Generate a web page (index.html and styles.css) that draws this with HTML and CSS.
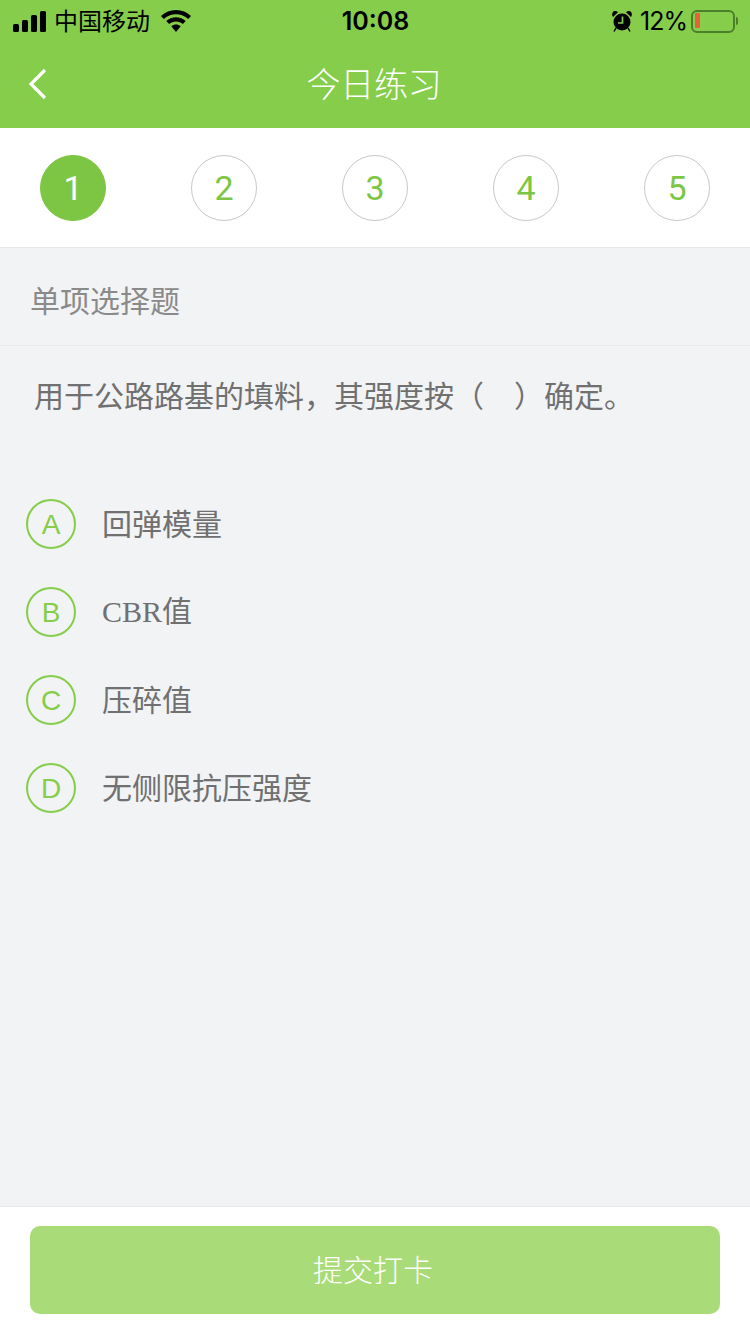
FILE: index.html
```html
<!DOCTYPE html>
<html lang="zh-CN">
<head>
<meta charset="utf-8">
<title>今日练习</title>
<link rel="stylesheet" href="styles.css">
</head>
<body>
<div class="page">
  <header class="top">
    <div class="status">
      <div class="status-left">
        <svg class="signal" width="34" height="21" viewBox="0 0 34 21"><rect x="0" y="13" width="6" height="8" rx="1.500"/><rect x="9" y="9" width="6" height="12" rx="1.500"/><rect x="18" y="4" width="6" height="17" rx="1.500"/><rect x="27" y="0" width="6" height="21" rx="1.500"/></svg>
        <span class="carrier">中国移动</span>
        <svg class="wifi" width="30" height="22" viewBox="0 0 30 22"><path d="M15 0C9.200 0 4 2.300 0 6l2.800 3C6 6 10.300 4.200 15 4.200S24 6 27.200 9L30 6C26 2.300 20.800 0 15 0z"/><path d="M15 7.200c-3.800 0-7.200 1.400-9.800 3.800l2.900 3c1.800-1.600 4.200-2.600 6.900-2.600s5.100 1 6.900 2.600l2.900-3c-2.600-2.400-6-3.800-9.800-3.800z"/><path d="M15 14.500c-1.800 0-3.400.6-4.700 1.700L15 22l4.700-5.800c-1.300-1.100-2.900-1.700-4.700-1.700z"/></svg>
      </div>
      <div class="time">10:08</div>
      <div class="status-right">
        <svg class="alarm" width="20" height="22" viewBox="0 0 20 22"><path d="M1 7 6 2.300C4.400.6 1.800.8.700 2.500-.2 3.900 0 5.800 1 7zM19 7 14 2.300c1.600-1.700 4.200-1.500 5.300.2.900 1.400.7 3.300-.3 4.500z"/><circle cx="10" cy="12" r="8.500"/><path d="M4 18l-2 3.500M16 18l2 3.500" stroke="#000" stroke-width="1.500" fill="none"/><path d="M10.500 6.500V13H6" stroke="#86cd4b" stroke-width="1.700" fill="none"/></svg>
        <span class="battery-pct">12%</span>
        <div class="battery"><span class="battery-fill"></span></div>
        <span class="battery-cap"></span>
      </div>
    </div>
    <nav class="nav">
      <svg class="back" width="20" height="32" viewBox="0 0 20 32"><path d="M17 2 3 16l14 14" fill="none" stroke="#fff" stroke-width="3.200"/></svg>
      <h1 class="title">今日练习</h1>
    </nav>
  </header>

  <section class="steps">
    <div class="step step-on">1</div>
    <div class="step">2</div>
    <div class="step">3</div>
    <div class="step">4</div>
    <div class="step">5</div>
  </section>

  <main class="main">
    <div class="qtype">单项选择题</div>
    <p class="question">用于公路路基的填料，其强度按（　）确定。</p>
    <ul class="options">
      <li class="option"><span class="letter">A</span><span class="opt-text">回弹模量</span></li>
      <li class="option"><span class="letter">B</span><span class="opt-text"><span class="latin">CBR</span>值</span></li>
      <li class="option"><span class="letter">C</span><span class="opt-text">压碎值</span></li>
      <li class="option"><span class="letter">D</span><span class="opt-text">无侧限抗压强度</span></li>
    </ul>
  </main>

  <footer class="footer">
    <button class="submit" type="button">提交打卡</button>
  </footer>
</div>
</body>
</html>
```
FILE: styles.css
```css
* { box-sizing: border-box; }
html, body { margin: 0; padding: 0; }
body {
  width: 750px;
  height: 1334px;
  overflow: hidden;
  font-family: "Noto Sans CJK SC", "Liberation Sans", sans-serif;
  background: #f2f3f5;
}
.page { display: flex; flex-direction: column; height: 1334px; }

.top { background: #86cd4b; height: 128px; display: flex; flex-direction: column; flex: none; }
.status {
  height: 40px;
  display: grid;
  grid-template-columns: 1fr auto 1fr;
  align-items: center;
  padding: 0 12px 0 13px;
  color: #000;
}
.status-left { display: flex; align-items: center; }
.signal { margin-right: 8px; }
.carrier { font-size: 24px; line-height: 40px; font-weight: 400; margin-left: -1px; position: relative; top: -1px; }
.wifi { margin-left: 11px; }
.time { font-family: Inter, "Liberation Sans", sans-serif; font-size: 25px; font-weight: 600; line-height: 42px; }
.status-right { display: flex; align-items: center; justify-content: flex-end; }
.alarm { margin-right: 8px; }
.battery-pct { font-family: Inter, "Liberation Sans", sans-serif; font-size: 25px; line-height: 42px; margin-right: 4px; letter-spacing: -1px; }
.battery {
  width: 44px;
  height: 23px;
  border: 2px solid #4c7f2c;
  border-radius: 6px;
  padding: 1px 2px;
  display: flex;
}
.battery-fill { width: 5px; height: 15px; background: #e8603a; border-radius: 1px; }
.battery-cap { width: 2px; height: 8px; background: #4c7f2c; margin-left: 1px; border-radius: 0 2px 2px 0; }

.nav { flex: 1; display: flex; align-items: center; justify-content: center; padding: 0 2px 4px 0; position: relative; }
.back { position: absolute; left: 28px; top: 28px; }
.title { margin: 0; color: #fff; font-size: 34px; font-weight: 300; letter-spacing: -0.3px; }

.steps {
  flex: none;
  height: 120px;
  background: #fff;
  border-bottom: 1px solid #e6e6e6;
  display: flex;
  justify-content: space-between;
  padding: 27px 40px 0;
}
.step {
  width: 66px;
  height: 66px;
  border-radius: 50%;
  border: 1px solid #c8c8c8;
  color: #7dc644;
  font-family: Roboto, "Liberation Sans", sans-serif;
  font-weight: 400;
  font-size: 34px;
  display: flex;
  align-items: center;
  justify-content: center;
}
.step-on { background: #7dc644; border-color: #7dc644; color: #fff; }

.main { flex: 1; min-height: 0; background: #f2f3f5; }
.qtype {
  height: 98px;
  padding: 4px 0 0 30px;
  display: flex;
  align-items: center;
  font-size: 30px;
  font-weight: 400;
  color: #8a8a8a;
  border-bottom: 1px solid #e9eaec;
}
.question {
  margin: 0;
  height: 134px;
  padding: 28px 0 0 34px;
  font-size: 30px;
  line-height: 40px;
  font-weight: 400;
  color: #707070;
}
.options { list-style: none; margin: 0; padding: 0 0 0 26px; }
.option { height: 88px; display: flex; align-items: center; }
.letter {
  width: 50px;
  height: 50px;
  border-radius: 50%;
  border: 2px solid #86cd4b;
  color: #86cd4b;
  font-family: "Liberation Sans", sans-serif;
  font-weight: 400;
  font-size: 28px;
  padding-top: 2px;
  display: flex;
  align-items: center;
  justify-content: center;
  flex: none;
}
.opt-text { margin: 0 0 4px 26px; font-size: 30px; font-weight: 400; color: #707070; line-height: 40px; }
.latin { font-family: "Liberation Serif", serif; font-weight: 400; }

.footer {
  flex: none;
  height: 128px;
  background: #fff;
  border-top: 1px solid #e6e7e9;
  padding: 19px 30px 0;
}
.submit {
  display: block;
  width: 100%;
  height: 88px;
  border: 0;
  border-radius: 10px;
  background: #a9dc78;
  color: #fff;
  font-family: inherit;
  font-size: 30px;
  font-weight: 300;
  padding: 0 4px 4px 0;
}
```
